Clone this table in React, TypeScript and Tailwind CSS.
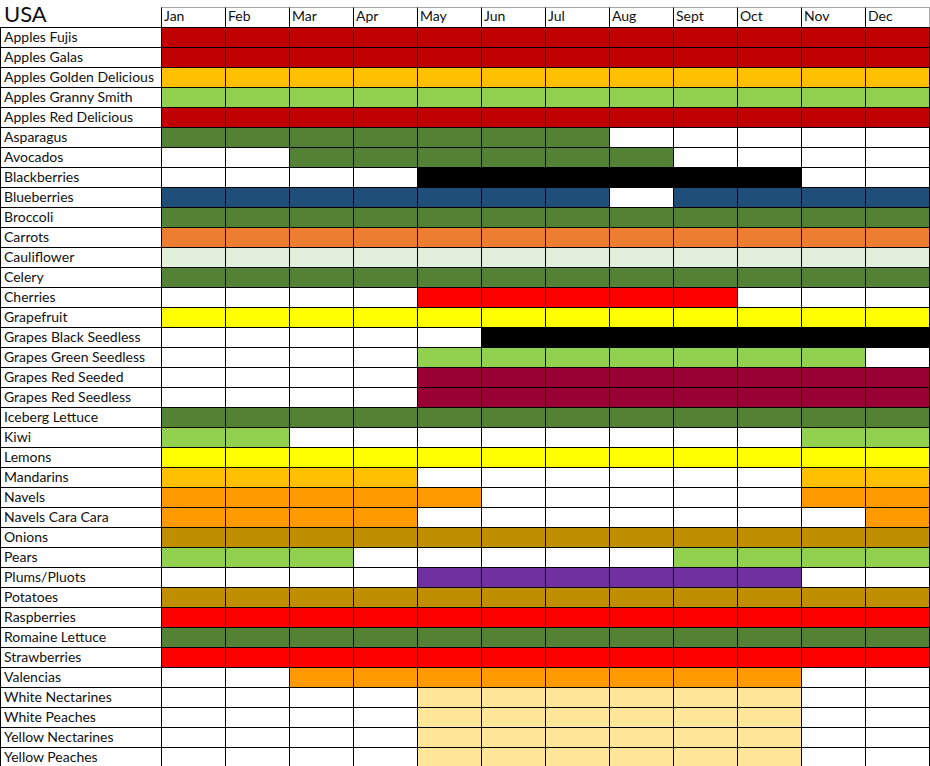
import React from "react";

// palette taken from the sheet's fills
const C = {
  red: "bg-[#c00000]",
  gold: "bg-[#ffc000]",
  lime: "bg-[#92d050]",
  green: "bg-[#548235]",
  blue: "bg-[#1f4e79]",
  carrot: "bg-[#ed7d31]",
  pale: "bg-[#e2efda]",
  bright: "bg-[#ff0000]",
  yellow: "bg-[#ffff00]",
  black: "bg-black",
  wine: "bg-[#990033]",
  orange: "bg-[#ff9900]",
  brown: "bg-[#bf8f00]",
  purple: "bg-[#7030a0]",
  peach: "bg-[#ffe699]",
};

type Fill = keyof typeof C;

const MONTHS = ["Jan", "Feb", "Mar", "Apr", "May", "Jun", "Jul", "Aug", "Sept", "Oct", "Nov", "Dec"];

// months are 1-based, inclusive
const span = (fill: Fill, ...ranges: [number, number][]) => {
  const out: (Fill | null)[] = Array(12).fill(null);
  ranges.forEach(([a, b]) => {
    for (let m = a; m <= b; m++) out[m - 1] = fill;
  });
  return out;
};
const all = (fill: Fill) => span(fill, [1, 12]);

const ROWS: [string, (Fill | null)[]][] = [
  ["Apples Fujis", all("red")],
  ["Apples Galas", all("red")],
  ["Apples Golden Delicious", all("gold")],
  ["Apples Granny Smith", all("lime")],
  ["Apples Red Delicious", all("red")],
  ["Asparagus", span("green", [1, 7])],
  ["Avocados", span("green", [3, 8])],
  ["Blackberries", span("black", [5, 10])],
  ["Blueberries", span("blue", [1, 7], [9, 12])],
  ["Broccoli", all("green")],
  ["Carrots", all("carrot")],
  ["Cauliflower", all("pale")],
  ["Celery", all("green")],
  ["Cherries", span("bright", [5, 9])],
  ["Grapefruit", all("yellow")],
  ["Grapes Black Seedless", span("black", [6, 12])],
  ["Grapes Green Seedless", span("lime", [5, 11])],
  ["Grapes Red Seeded", span("wine", [5, 12])],
  ["Grapes Red Seedless", span("wine", [5, 12])],
  ["Iceberg Lettuce", all("green")],
  ["Kiwi", span("lime", [1, 2], [11, 12])],
  ["Lemons", all("yellow")],
  ["Mandarins", span("gold", [1, 4], [11, 12])],
  ["Navels", span("orange", [1, 5], [11, 12])],
  ["Navels Cara Cara", span("orange", [1, 4], [12, 12])],
  ["Onions", all("brown")],
  ["Pears", span("lime", [1, 3], [9, 12])],
  ["Plums/Pluots", span("purple", [5, 10])],
  ["Potatoes", all("brown")],
  ["Raspberries", all("bright")],
  ["Romaine Lettuce", all("green")],
  ["Strawberries", all("bright")],
  ["Valencias", span("orange", [3, 10])],
  ["White Nectarines", span("peach", [5, 10])],
  ["White Peaches", span("peach", [5, 10])],
  ["Yellow Nectarines", span("peach", [5, 10])],
  ["Yellow Peaches", span("peach", [5, 10])],
];

export default function App() {
  return (
    <div className="h-[766px] w-[930px] overflow-hidden bg-white font-['Lato','Liberation_Sans',sans-serif] text-[14px] text-[#111]">
      <div className="grid grid-cols-[161px_repeat(11,64px)_65px]">
        {/* header */}
        <div className="h-[27px] pl-[4px] pt-[1px] text-[22px] leading-[26px]">USA</div>
        {MONTHS.map((m, i) => (
          <div
            key={m}
            className={`mt-[7px] h-5 border-l border-t border-l-black border-t-[#a6a6a6] pl-[2px] leading-[15px] ${i === 11 ? "border-r border-r-[#a6a6a6]" : ""}`}
          >
            {m}
          </div>
        ))}

        {ROWS.map(([name, fills]) => (
          <React.Fragment key={name}>
            <div className="h-5 border-l border-t border-black pl-[3px] leading-[18px] whitespace-nowrap">{name}</div>
            {fills.map((f, i) => (
              <div
                key={i}
                className={`h-5 border-l border-t border-black ${f ? C[f] : "bg-white"} ${i === 11 ? "border-r" : ""}`}
              />
            ))}
          </React.Fragment>
        ))}
      </div>
    </div>
  );
}
